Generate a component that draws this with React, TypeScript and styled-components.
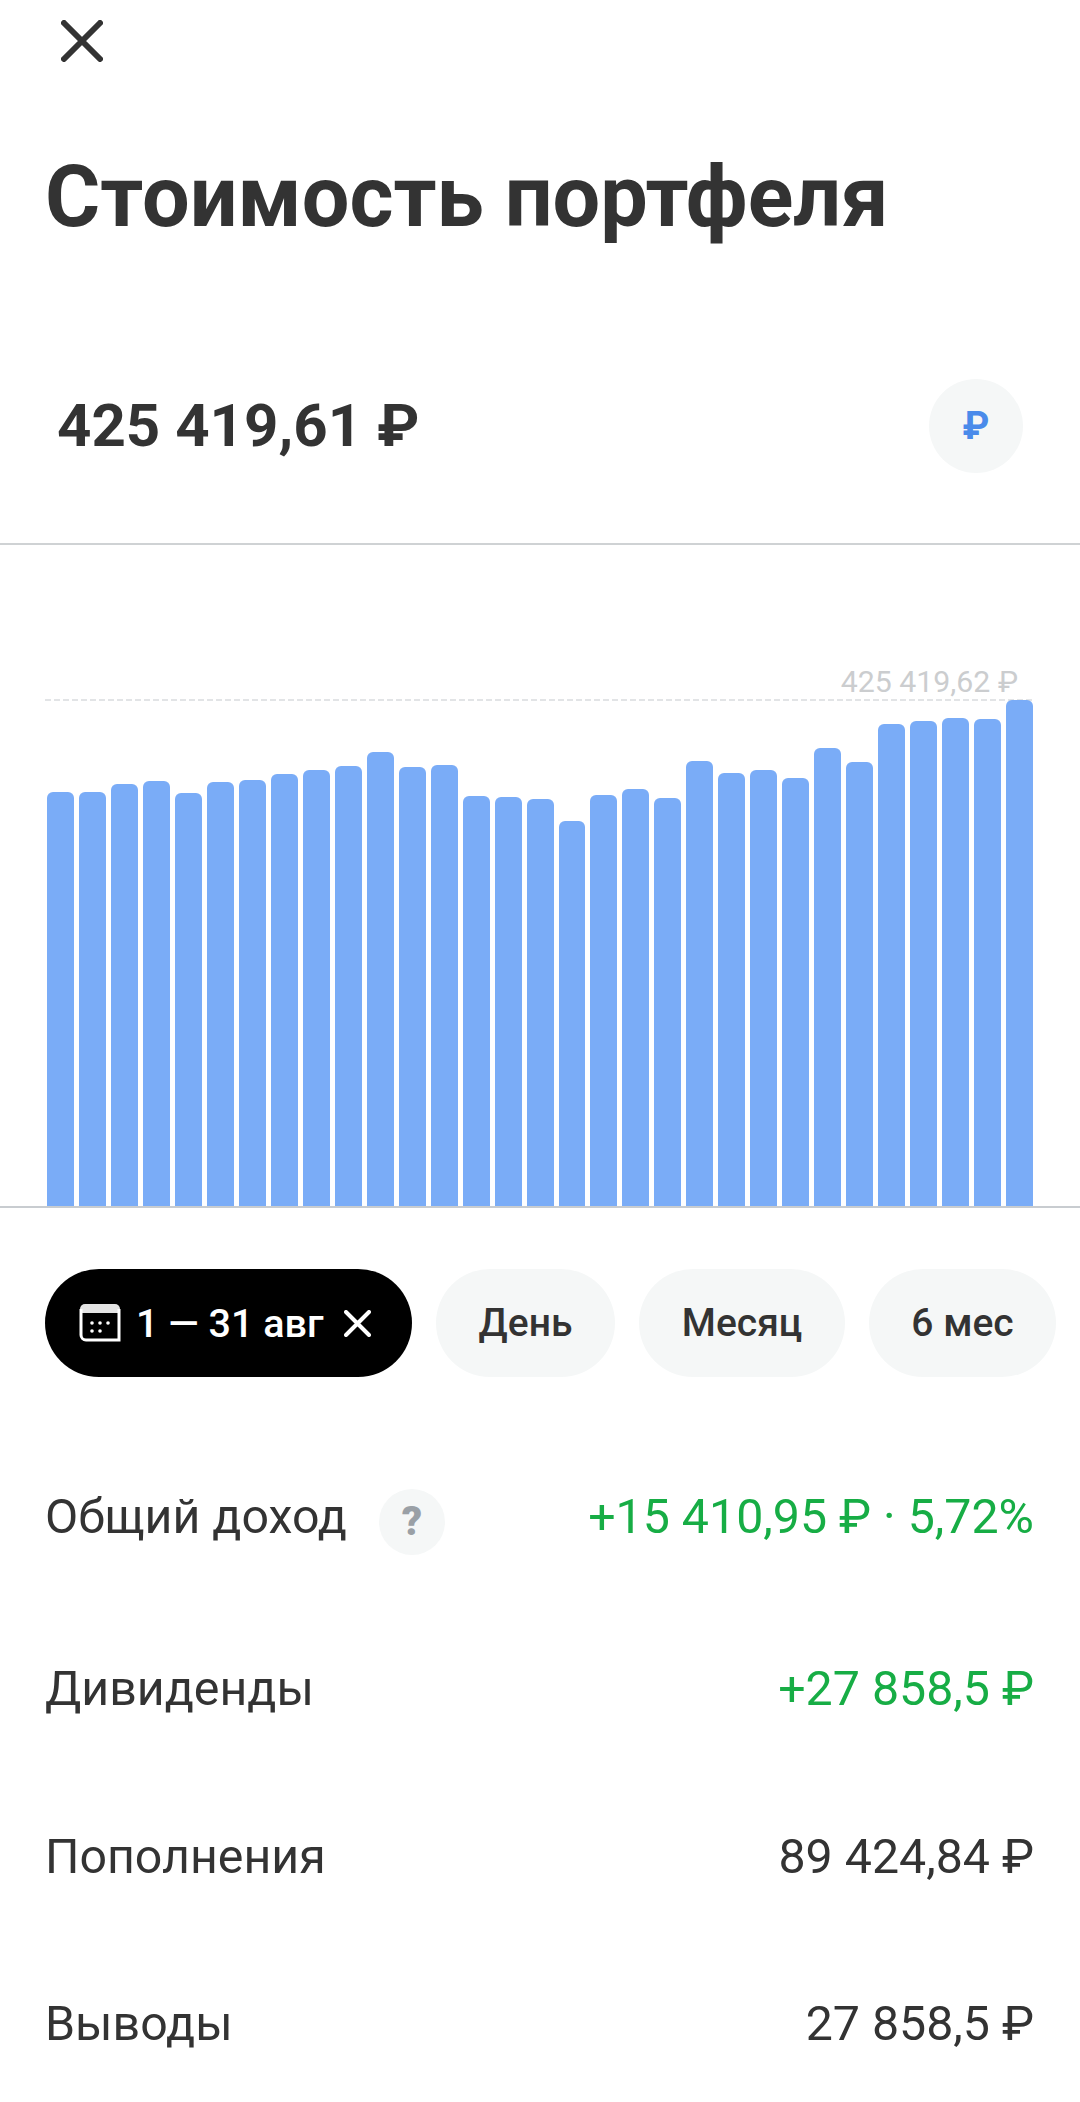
import styled, { createGlobalStyle } from "styled-components";

const GlobalStyle = createGlobalStyle`
  html, body {
    margin: 0;
    padding: 0;
    background: #fff;
  }
  * {
    box-sizing: border-box;
  }
`;

const Page = styled.div`
  width: 1080px;
  height: 2102px;
  overflow: hidden;
  background: #fff;
  color: #333;
  font-family: Roboto, "Liberation Sans", sans-serif;
`;

const CloseButton = styled.div`
  height: 82px;
  padding: 20px 0 0 61px;
  svg {
    display: block;
  }
`;

const Title = styled.h1`
  margin: 0;
  padding-left: 45px;
  height: 190px;
  padding-top: 70px;
  font-size: 84.5px;
  line-height: 92px;
  font-weight: 700;
`;

const BalanceRow = styled.div`
  display: flex;
  justify-content: space-between;
  align-items: center;
  height: 273px;
  padding: 36px 57px 0 57px;
  border-bottom: 2px solid #cfd2d4;
`;

const Balance = styled.div`
  font-size: 60px;
  font-weight: 700;
`;

const CurrencyBadge = styled.div`
  width: 94px;
  height: 94px;
  border-radius: 50%;
  background: #f5f7f7;
  color: #4a8bea;
  font-size: 38px;
  font-weight: 700;
  display: flex;
  align-items: center;
  justify-content: center;
`;

const Chart = styled.div`
  position: relative;
  height: 663px;
  padding: 0 47px 0 47px;
  display: flex;
  align-items: flex-end;
  gap: 5px;
  border-bottom: 2px solid #c8ccd0;
`;

const MaxLine = styled.div`
  position: absolute;
  left: 45px;
  right: 47px;
  top: 154px;
  height: 2px;
  background: repeating-linear-gradient(
    to right,
    #e2e4e6 0,
    #e2e4e6 6px,
    transparent 6px,
    transparent 9px
  );
`;

const MaxLabel = styled.div`
  position: absolute;
  right: 62px;
  top: 120px;
  font-size: 30.3px;
  line-height: 34px;
  color: #cbcdcf;
`;

const Bar = styled.div`
  position: relative;
  flex: 1 1 0;
  min-width: 0;
  background: #7aacf7;
  border-radius: 6px 6px 0 0;
`;

const Chips = styled.div`
  display: flex;
  gap: 24px;
  padding: 61px 0 0 45px;
`;

const Chip = styled.div<{ $width: number }>`
  width: ${({ $width }) => $width}px;
  flex: none;
  height: 108px;
  border-radius: 54px;
  display: flex;
  align-items: center;
  justify-content: center;
  font-size: 39px;
  font-weight: 500;
  background: #f5f7f7;
  color: #333;
`;

const ActiveChip = styled(Chip)`
  justify-content: flex-start;
  padding-left: 34px;
  gap: 15px;
  font-size: 39.5px;
  background: #000;
  color: #fff;
  svg:last-child {
    margin-left: 5px;
  }
`;

const Stats = styled.div`
  margin-top: 113px;
`;

const StatRow = styled.div<{ $height: number }>`
  height: ${({ $height }) => $height}px;
  padding: 0 46px 0 45px;
  display: flex;
  justify-content: space-between;
  align-items: flex-start;
  font-size: 48.3px;
  line-height: 54px;
`;

const StatLabel = styled.div`
  display: flex;
  align-items: center;
  gap: 32px;
`;

const HelpBadge = styled.span`
  width: 66px;
  height: 66px;
  border-radius: 50%;
  background: #f5f7f7;
  color: #9aa0a6;
  font-size: 40px;
  font-weight: 900;
  display: inline-flex;
  align-items: center;
  justify-content: center;
  margin: -2px 0 -12px;
`;

const StatValue = styled.div<{ $positive?: boolean }>`
  color: ${({ $positive }) => ($positive ? "#17ad45" : "#333")};
`;

const barTops = [
  792, 792, 784, 781, 793, 782, 780, 774, 770, 766, 752, 767, 765, 796, 797,
  799, 821, 795, 789, 798, 761, 773, 770, 778, 748, 762, 724, 721, 718, 719,
  700,
];

const CHART_BASE = 1206;

function CalendarIcon() {
  return (
    <svg width="42" height="38" viewBox="0 0 42 38" fill="none">
      <path d="M6 0H36a5 5 0 0 1 5 5V9H1V5a5 5 0 0 1 5-5Z" fill="#e4e4e4" />
      <path d="M2 5V31a5 5 0 0 0 5 5H40V5" stroke="#fff" strokeWidth="3" />
      <g fill="#fff">
        <circle cx="13" cy="19" r="1.8" />
        <circle cx="21" cy="19" r="1.8" />
        <circle cx="29" cy="19" r="1.8" />
        <circle cx="13" cy="27" r="1.8" />
        <circle cx="21" cy="27" r="1.8" />
      </g>
    </svg>
  );
}

function CrossIcon({ size, stroke, color }: { size: number; stroke: number; color: string }) {
  const inset = stroke / 2;
  const end = size - inset;
  return (
    <svg width={size} height={size} viewBox={`0 0 ${size} ${size}`} fill="none">
      <path
        d={`M${inset} ${inset}L${end} ${end}M${end} ${inset}L${inset} ${end}`}
        stroke={color}
        strokeWidth={stroke}
        strokeLinecap="round"
      />
    </svg>
  );
}

export default function App() {
  return (
    <Page>
      <GlobalStyle />
      <CloseButton>
        <CrossIcon size={42} stroke={6} color="#333" />
      </CloseButton>
      <Title>Стоимость портфеля</Title>
      <BalanceRow>
        <Balance>425 419,61 ₽</Balance>
        <CurrencyBadge>₽</CurrencyBadge>
      </BalanceRow>
      <Chart>
        <MaxLine />
        <MaxLabel>425 419,62 ₽</MaxLabel>
        {barTops.map((top, i) => (
          <Bar key={i} style={{ height: CHART_BASE - top }} />
        ))}
      </Chart>
      <Chips>
        <ActiveChip $width={367}>
          <CalendarIcon />
          1 — 31 авг
          <CrossIcon size={27} stroke={4} color="#fff" />
        </ActiveChip>
        <Chip $width={179}>День</Chip>
        <Chip $width={206}>Месяц</Chip>
        <Chip $width={187}>6 мес</Chip>
      </Chips>
      <Stats>
        <StatRow $height={172}>
          <StatLabel>
            Общий доход
            <HelpBadge>?</HelpBadge>
          </StatLabel>
          <StatValue $positive>+15 410,95 ₽ · 5,72%</StatValue>
        </StatRow>
        <StatRow $height={168}>
          <StatLabel>Дивиденды</StatLabel>
          <StatValue $positive>+27 858,5 ₽</StatValue>
        </StatRow>
        <StatRow $height={167}>
          <StatLabel>Пополнения</StatLabel>
          <StatValue>89 424,84 ₽</StatValue>
        </StatRow>
        <StatRow $height={100}>
          <StatLabel>Выводы</StatLabel>
          <StatValue>27 858,5 ₽</StatValue>
        </StatRow>
      </Stats>
    </Page>
  );
}
